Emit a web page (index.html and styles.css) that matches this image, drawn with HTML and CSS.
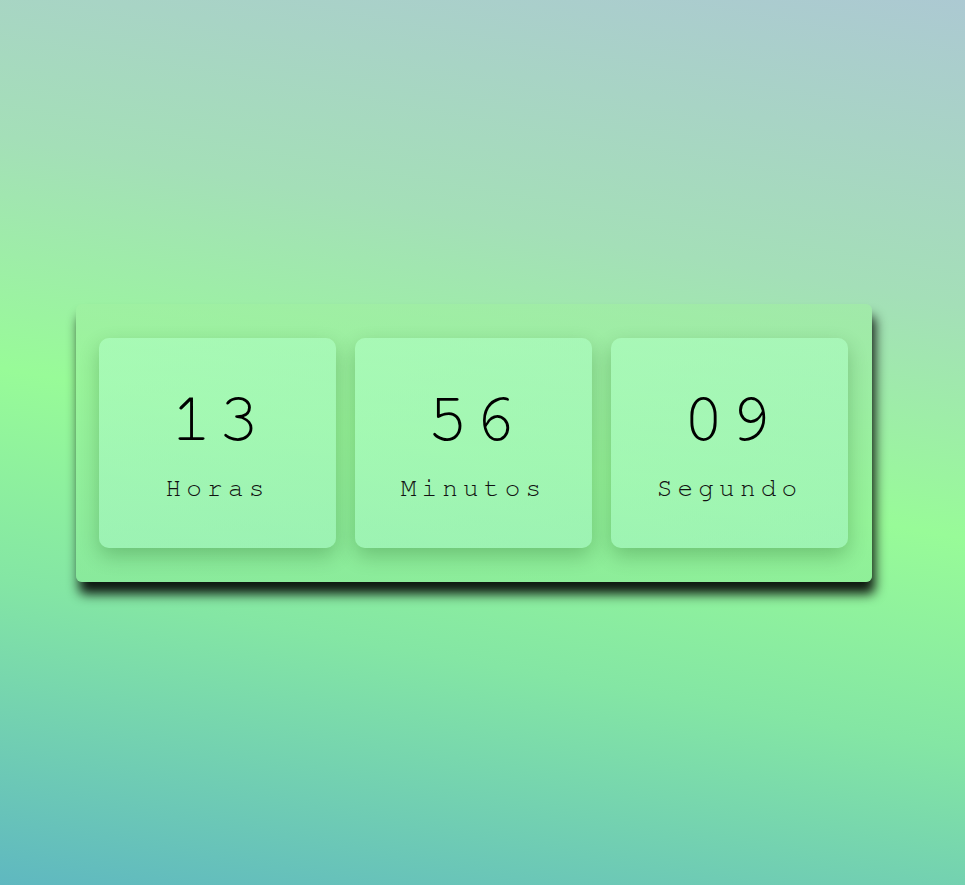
FILE: index.html
```html
<!DOCTYPE html>
<html lang="es">
<head>
<meta charset="utf-8">
<title>Reloj</title>
<link rel="stylesheet" href="styles.css">
</head>
<body>
<main class="page">
  <section class="clock">
    <div class="unit">
      <span class="value">13</span>
      <span class="label">Horas</span>
    </div>
    <div class="unit">
      <span class="value">56</span>
      <span class="label">Minutos</span>
    </div>
    <div class="unit">
      <span class="value">09</span>
      <span class="label">Segundo</span>
    </div>
  </section>
</main>
</body>
</html>
```

FILE: styles.css
```css
html, body {
  margin: 0;
  height: 100%;
}
body {
  background: linear-gradient(190deg, #acc9d2 0%, #a4dfb8 29%, #98fb98 51%, #84e6a4 71%, #5fb8c0 100%);
  font-family: "FreeMono", "Nimbus Mono PS", "Nimbus Mono L", "Courier New", "Liberation Mono", monospace;
}
.page {
  height: 100%;
  display: flex;
  justify-content: center;
  padding: 304px 0 0 0;
  box-sizing: border-box;
}
.clock {
  width: 796px;
  height: 278px;
  box-sizing: border-box;
  margin-right: 17px;
  padding: 34px 24px 34px 23px;
  display: flex;
  gap: 19px;
  border-radius: 6px;
  background: linear-gradient(180deg, rgba(160, 240, 160, 0.55), rgba(140, 235, 150, 0.55));
  box-shadow: 3px 12px 12px rgba(0, 0, 0, 0.9);
}
.unit {
  flex: 1;
  border-radius: 10px;
  background: linear-gradient(170deg, rgba(175, 255, 195, 0.6), rgba(165, 245, 195, 0.6));
  box-shadow: 0 8px 20px rgba(0, 60, 0, 0.24);
  display: flex;
  flex-direction: column;
  align-items: center;
}
.value {
  font-size: 70px;
  line-height: 1;
  letter-spacing: 5px;
  color: #000;
  margin-top: 46px;
}
.label {
  font-size: 26px;
  line-height: 1;
  letter-spacing: 5.2px;
  color: #111;
  margin-top: 21px;
}
```
